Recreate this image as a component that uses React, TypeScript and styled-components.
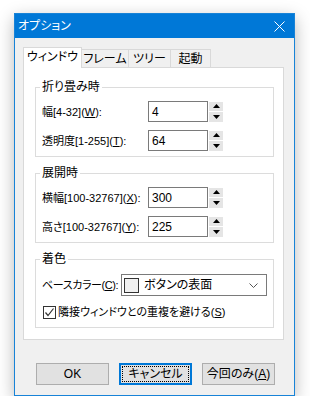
import React from 'react';
import styled, { createGlobalStyle } from 'styled-components';

const GlobalStyle = createGlobalStyle`
  html, body { margin: 0; padding: 0; background: #ffffff; }
  body {
    font-family: "Liberation Sans", "Noto Sans CJK JP", sans-serif;
    font-size: 11px;
    line-height: 14px;
    color: #000;
    font-feature-settings: "palt";
  }
  * { box-sizing: border-box; }
`;

const SWindow = styled.div`
  margin: 13px 0 0 14px;
  width: 281px;
  height: 383px;
  border: 1px solid #1883d7;
  background: #f0f0f0;
  box-shadow: 0 5px 16px rgba(0, 0, 0, 0.28);
  display: flex;
  flex-direction: column;
`;

const STitleBar = styled.div`
  height: 24px;
  background: #0078d7;
  color: #fff;
  display: flex;
  align-items: center;
  justify-content: space-between;
  padding: 0 9px 0 3px;
`;

const STitle = styled.span`
  font-size: 12px;
`;

const SBody = styled.div`
  flex: 1;
  display: flex;
  flex-direction: column;
  padding: 9px 10px 0 8px;
`;

const STabRow = styled.div`
  display: flex;
  align-items: flex-end;
  height: 20px;
`;

const STab = styled.div<{ active?: boolean; w: number }>`
  position: relative;
  width: ${({ w }) => w}px;
  height: ${({ active }) => (active ? 21 : 18)}px;
  margin-bottom: ${({ active }) => (active ? -1 : 0)}px;
  margin-left: ${({ active }) => (active ? 0 : -1)}px;
  z-index: ${({ active }) => (active ? 2 : 1)};
  border: 1px solid #d9d9d9;
  border-bottom: none;
  background: ${({ active }) => (active ? '#ffffff' : '#f0f0f0')};
  display: flex;
  align-items: center;
  justify-content: center;
  white-space: nowrap;
  font-size: 12px;
  padding-bottom: ${({ active }) => (active ? 2 : 0)}px;
  &:first-child { margin-left: 0; }
`;

const SPanel = styled.div`
  border: 1px solid #d9d9d9;
  background: #ffffff;
  padding: 12px 9px 11px 11px;
  display: flex;
  flex-direction: column;
  gap: 9px;
`;

const SGroup = styled.fieldset`
  margin: 0;
  padding: 0;
  border: 1px solid #dcdcdc;
  min-width: 0;
`;

const SLegend = styled.legend`
  margin-left: 4px;
  padding: 0 2px;
  line-height: 14px;
  font-size: 12px;
`;

const SGroupBody = styled.div<{ pt: number; pb: number; gap: number }>`
  display: flex;
  flex-direction: column;
  gap: ${({ gap }) => gap}px;
  padding: ${({ pt }) => pt}px 6px ${({ pb }) => pb}px 6px;
`;

const SRow = styled.div<{ h?: number }>`
  display: flex;
  align-items: center;
  height: ${({ h }) => h ?? 21}px;
`;

const SLabel = styled.span<{ w: number; tight?: boolean }>`
  width: ${({ w }) => w}px;
  flex-shrink: 0;
  white-space: nowrap;
  letter-spacing: ${({ tight }) => (tight ? '-0.4px' : 'normal')};
`;

const SInput = styled.div`
  width: 60px;
  height: 21px;
  border: 1px solid #7a7a7a;
  background: #fff;
  display: flex;
  align-items: center;
  padding-left: 3px;
  font-size: 12px;
`;

const SSpin = styled.div`
  margin-left: 1px;
  width: 14px;
  height: 20px;
  display: flex;
  flex-direction: column;
  gap: 1px;
`;

const SSpinButton = styled.div`
  flex: 1;
  background: #e5e5e5;
  display: flex;
  align-items: center;
  justify-content: center;
`;

const SU = styled.span`
  text-decoration: underline;
  text-underline-offset: 1px;
`;

const SSelect = styled.div`
  width: 146px;
  height: 22px;
  border: 1px solid #7a7a7a;
  background: #fff;
  display: flex;
  align-items: center;
  padding: 0 8px 0 2px;
  gap: 5px;
`;

const SSwatch = styled.div`
  width: 15px;
  height: 15px;
  border: 1px solid #333;
  background: #f0f0f0;
`;

const SSelectText = styled.span`
  flex: 1;
  font-size: 12px;
`;

const SCheckRow = styled.label`
  display: flex;
  align-items: center;
  gap: 2px;
  height: 14px;
  padding-left: 1px;
  white-space: nowrap;
`;

const SCheckBox = styled.div`
  width: 13px;
  height: 13px;
  border: 1px solid #333;
  background: #fff;
  display: flex;
  align-items: center;
  justify-content: center;
`;

const SFooter = styled.div`
  display: flex;
  justify-content: flex-end;
  gap: 10px;
  padding: 23px 9px 0 0;
`;

const SButton = styled.div<{ focused?: boolean }>`
  width: 73px;
  height: 22px;
  background: #e1e1e1;
  border: ${({ focused }) => (focused ? '2px solid #0078d7' : '1px solid #adadad')};
  display: flex;
  align-items: center;
  justify-content: center;
  padding: 1px;
  white-space: nowrap;
  font-size: 12px;
`;

const SFocusRect = styled.div`
  width: 100%;
  height: 100%;
  border: 1px dotted #000;
  display: flex;
  align-items: center;
  justify-content: center;
`;

const Up = () => (
  <svg width="7" height="4" viewBox="0 0 7 4"><polygon points="0,4 7,4 3.5,0" fill="#000" /></svg>
);
const Down = () => (
  <svg width="7" height="4" viewBox="0 0 7 4"><polygon points="0,0 7,0 3.5,4" fill="#000" /></svg>
);

function NumberField({ label, value }: { label: React.ReactNode; value: string }) {
  return (
    <SRow>
      <SLabel w={106}>{label}</SLabel>
      <SInput>{value}</SInput>
      <SSpin>
        <SSpinButton><Up /></SSpinButton>
        <SSpinButton><Down /></SSpinButton>
      </SSpin>
    </SRow>
  );
}

export default function App() {
  return (
    <>
      <GlobalStyle />
      <SWindow>
        <STitleBar>
          <STitle>オプション</STitle>
          <svg width="11" height="11" viewBox="0 0 11 11">
            <path d="M0.5 0.5 L10.5 10.5 M10.5 0.5 L0.5 10.5" stroke="#fff" strokeWidth="1" />
          </svg>
        </STitleBar>
        <SBody>
          <STabRow>
            <STab active w={59}>ウィンドウ</STab>
            <STab w={48}>フレーム</STab>
            <STab w={43}>ツリー</STab>
            <STab w={41}>起動</STab>
          </STabRow>
          <SPanel>
            <SGroup>
              <SLegend>折り畳み時</SLegend>
              <SGroupBody pt={7} pb={5} gap={8}>
                <NumberField label={<>幅[4-32](<SU>W</SU>):</>} value="4" />
                <NumberField label={<>透明度[1-255](<SU>T</SU>):</>} value="64" />
              </SGroupBody>
            </SGroup>
            <SGroup>
              <SLegend>展開時</SLegend>
              <SGroupBody pt={7} pb={5} gap={8}>
                <NumberField label={<>横幅[100-32767](<SU>X</SU>):</>} value="300" />
                <NumberField label={<>高さ[100-32767](<SU>Y</SU>):</>} value="225" />
              </SGroupBody>
            </SGroup>
            <SGroup>
              <SLegend>着色</SLegend>
              <SGroupBody pt={8} pb={8} gap={9}>
                <SRow h={22}>
                  <SLabel w={79} tight>ベースカラー(<SU>C</SU>):</SLabel>
                  <SSelect>
                    <SSwatch />
                    <SSelectText>ボタンの表面</SSelectText>
                    <svg width="9" height="5" viewBox="0 0 9 5">
                      <path d="M0.5 0.5 L4.5 4.5 L8.5 0.5" stroke="#555" fill="none" strokeWidth="1" />
                    </svg>
                  </SSelect>
                </SRow>
                <SCheckRow>
                  <SCheckBox>
                    <svg width="11" height="11" viewBox="0 0 11 11">
                      <path d="M1.5 5.5 L4 8.5 L9.5 1.5" stroke="#333" fill="none" strokeWidth="1.2" />
                    </svg>
                  </SCheckBox>
                  <span>隣接ウィンドウとの重複を避ける(<SU>S</SU>)</span>
                </SCheckRow>
              </SGroupBody>
            </SGroup>
          </SPanel>
          <SFooter>
            <SButton>OK</SButton>
            <SButton focused><SFocusRect>キャンセル</SFocusRect></SButton>
            <SButton>今回のみ(<SU>A</SU>)</SButton>
          </SFooter>
        </SBody>
      </SWindow>
    </>
  );
}
